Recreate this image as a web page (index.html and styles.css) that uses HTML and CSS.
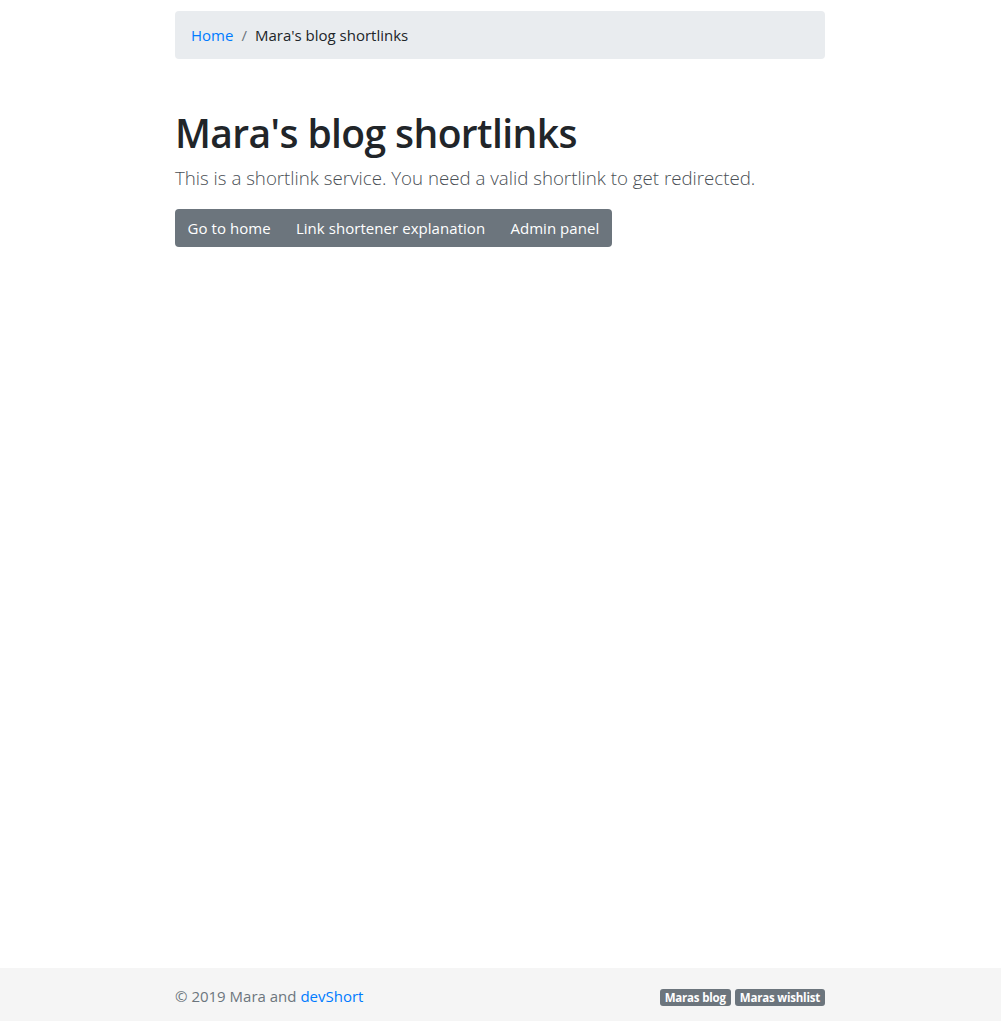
FILE: index.html
```html
<!DOCTYPE html>
<html lang="en">
<head>
<meta charset="utf-8">
<title>Mara's blog shortlinks</title>
<link rel="stylesheet" href="styles.css">
</head>
<body>
<div class="page">
  <main class="container">
    <nav class="breadcrumb">
      <a href="#" class="crumb-link">Home</a>
      <span class="crumb-sep">/</span>
      <span class="crumb-active">Mara's blog shortlinks</span>
    </nav>
    <h1 class="title">Mara's blog shortlinks</h1>
    <p class="lead">This is a shortlink service. You need a valid shortlink to get redirected.</p>
    <div class="btn-group">
      <a href="#" class="btn">Go to home</a>
      <a href="#" class="btn">Link shortener explanation</a>
      <a href="#" class="btn">Admin panel</a>
    </div>
  </main>
  <footer class="footer">
    <div class="container footer-inner">
      <span class="copy">© 2019 Mara and <a href="#" class="link">devShort</a></span>
      <span class="badges">
        <a href="#" class="badge">Maras blog</a>
        <a href="#" class="badge">Maras wishlist</a>
      </span>
    </div>
  </footer>
</div>
</body>
</html>
```

FILE: styles.css
```css
* { box-sizing: border-box; }
html, body { margin: 0; padding: 0; }
body {
  font-family: "Open Sans", "Noto Sans", sans-serif;
  font-size: 16px;
  line-height: 1.5;
  color: #212529;
  background: #fff;
}
.page {
  min-height: 100vh;
  display: flex;
  flex-direction: column;
}
.container {
  width: 650px;
  margin: 0 auto 0 175px;
}
main.container { flex: 1; padding-top: 11px; }
.breadcrumb {
  display: flex;
  align-items: center;
  height: 48px;
  padding: 0 16px;
  background: #e9ecef;
  border-radius: 4px;
  font-size: 15px;
}
.crumb-link { color: #007bff; text-decoration: none; }
.crumb-sep { color: #6c757d; padding: 0 8px; }
.crumb-active { color: #212529; }
.title {
  margin: 50px 0 0;
  font-size: 39px;
  font-weight: 600;
  line-height: 48px;
  letter-spacing: -0.6px;
}
.lead {
  margin: 6px 0 0;
  font-size: 18.7px;
  font-weight: 300;
  line-height: 30px;
  color: #4a4f55;
}
.btn-group {
  display: inline-flex;
  margin-top: 16px;
  background: #6c757d;
  border-radius: 4px;
}
.btn {
  display: block;
  padding: 0 12.6px;
  height: 38px;
  line-height: 38px;
  color: #fff;
  text-decoration: none;
  font-size: 15px;
  letter-spacing: 0.05px;
}
.footer {
  background: #f5f5f5;
  height: 53px;
}
.footer-inner {
  height: 100%;
  display: flex;
  align-items: center;
  justify-content: space-between;
  padding-top: 4px;
}
.copy { color: #6c757d; font-size: 15px; }
.link { color: #007bff; text-decoration: none; }
.badges { display: flex; gap: 4px; padding-top: 2px; }
.badge {
  display: block;
  background: #6c757d;
  color: #fff;
  font-size: 11.5px;
  font-weight: 700;
  line-height: 17px;
  padding: 0 5px;
  border-radius: 3px;
  text-decoration: none;
  letter-spacing: -0.2px;
}
```
